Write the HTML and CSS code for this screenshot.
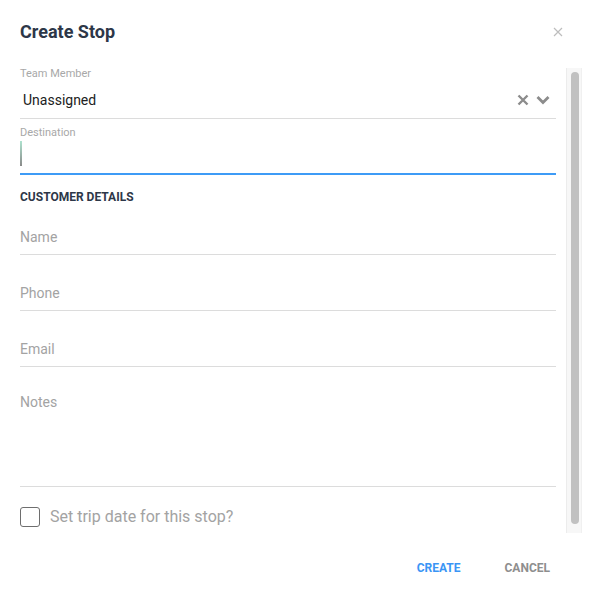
FILE: index.html
```html
<!DOCTYPE html>
<html>
<head>
<meta charset="utf-8">
<link rel="stylesheet" href="styles.css">
</head>
<body>
<div class="dialog">
  <div class="header">
    <h1 class="title">Create Stop</h1>
    <svg class="close" width="10" height="10" viewBox="0 0 10 10"><path d="M1 1L9 9M9 1L1 9" stroke="#bdbdbd" stroke-width="1.2" fill="none"/></svg>
  </div>
  <div class="body">
    <div class="content">
      <div class="label label-first">Team Member</div>
      <div class="select">
        <span class="select-value">Unassigned</span>
        <span class="select-icons">
          <svg width="12" height="12" viewBox="0 0 12 12"><path d="M1.5 1.5L10.5 10.5M10.5 1.5L1.5 10.5" stroke="#8c8c8c" stroke-width="2.4" fill="none"/></svg>
          <svg width="14" height="10" viewBox="0 0 14 10"><path d="M1.5 2L7 7.5L12.5 2" stroke="#8c8c8c" stroke-width="2.8" fill="none"/></svg>
        </span>
      </div>
      <div class="label label-dest">Destination</div>
      <div class="input-focus"><span class="caret"></span></div>
      <div class="section">CUSTOMER DETAILS</div>
      <div class="field field-first">Name</div>
      <div class="field">Phone</div>
      <div class="field">Email</div>
      <div class="field field-notes">Notes</div>
      <div class="check-row">
        <span class="checkbox"></span>
        <span class="check-text">Set trip date for this stop?</span>
      </div>
    </div>
    <div class="scrollbar"><div class="thumb"></div></div>
  </div>
  <div class="footer">
    <span class="btn btn-primary">CREATE</span>
    <span class="btn btn-cancel">CANCEL</span>
  </div>
</div>
</body>
</html>
```

FILE: styles.css
```css
* { box-sizing: border-box; }
html, body { margin: 0; padding: 0; background: #fff; }
body { font-family: Roboto, "Liberation Sans", sans-serif; width: 591px; height: 605px; overflow: hidden; }
.dialog { padding-left: 20px; }
.header { height: 64px; display: flex; align-items: center; justify-content: space-between; padding-right: 28px; }
.title { margin: 0; font-size: 18px; font-weight: 700; color: #2d3748; line-height: 22px; }
.close { display: block; }
.body { display: flex; height: 469px; }
.content { width: 536px; }
.label { font-size: 11px; line-height: 14px; color: #a8a8a8; }
.label-first { margin-top: 3px; }
.select { height: 38px; border-bottom: 1px solid #dcdcdc; display: flex; align-items: center; justify-content: space-between; padding-left: 3px; padding-right: 6px; }
.select-value { font-size: 14px; color: #212121; line-height: 20px; }
.select-icons { display: flex; align-items: center; gap: 7px; }
.select-icons svg { display: block; }
.label-dest { margin-top: 7px; }
.input-focus { height: 35px; border-bottom: 2px solid #3e9bf6; padding-top: 1px; }
.caret { display: block; width: 1.5px; height: 25px; background: linear-gradient(#aee3cf, #8a8a8a); }
.section { margin-top: 15px; font-size: 12px; font-weight: 700; line-height: 14px; color: #2d3748; }
.field { padding: 27px 0 6px; line-height: 22px; font-size: 14px; color: #a3a3a3; border-bottom: 1px solid #dcdcdc; }
.field-first { padding-top: 22px; }
.field-notes { padding-top: 24px; height: 120px; }
.check-row { margin-top: 20px; display: flex; align-items: center; height: 20px; }
.checkbox { width: 20px; height: 20px; border: 1.5px solid #6e6e6e; border-radius: 3px; }
.check-text { margin-left: 10px; font-size: 16px; line-height: 18px; color: #a3a3a3; }
.scrollbar { margin-left: 10px; margin-top: 4px; width: 16px; height: 465px; background: #f7f7f7; border-left: 1px solid #ececec; border-right: 1px solid #f0f0f0; padding: 4px 3px 0 4px; }
.thumb { width: 8px; height: 452px; background: #c1c1c1; border-radius: 4px; }
.footer { height: 70px; display: flex; align-items: center; justify-content: flex-end; gap: 12px; padding-right: 25px; }
.btn { font-size: 12px; font-weight: 700; padding: 0 16px; line-height: 14px; }
.btn-primary { color: #3a95f5; }
.btn-cancel { color: #8e8e8e; }
```
